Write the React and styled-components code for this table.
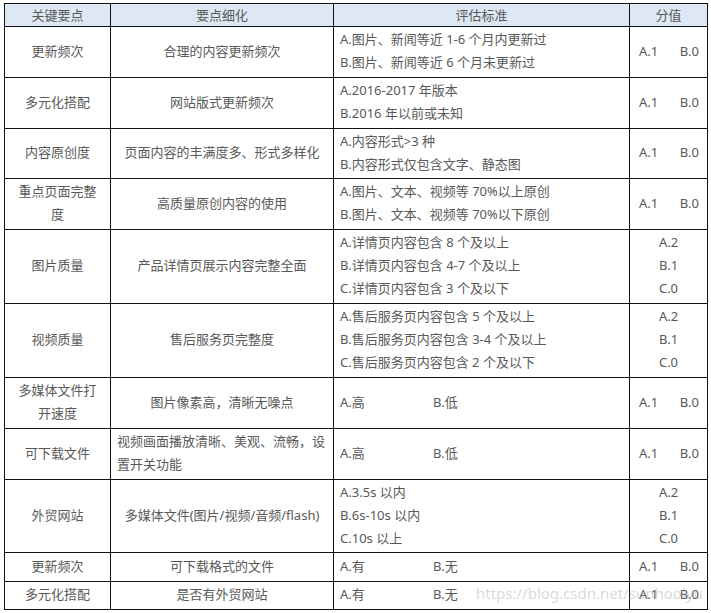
import React from "react";
import styled, { createGlobalStyle } from "styled-components";

const GlobalStyle = createGlobalStyle`
  body {
    margin: 0;
    background: #fff;
    font-family: "Noto Sans", "Noto Sans CJK SC", sans-serif;
  }
`;

const Page = styled.div`
  position: relative;
  padding: 3px 0 0 4px;
`;

const Table = styled.table`
  border-collapse: collapse;
  table-layout: fixed;
  width: 703px;
  color: #595959;
  font-size: 13px;
`;

const Row = styled.tr`
  height: ${(p) => p.$h}px;
`;

const HeadCell = styled.th`
  border: 1px solid #111;
  background: #dde8f4;
  font-weight: normal;
  text-align: center;
  line-height: 18px;
  padding: 0 0 1px;
`;

const Cell = styled.td`
  border: 1px solid #111;
  padding: 0 ${(p) => (p.$narrow ? 8 : 6)}px 2px;
  text-align: ${(p) => p.$align || "center"};
  vertical-align: middle;
  line-height: 23px;
`;

const Pair = styled.span`
  display: inline-block;
  width: ${(p) => p.$w}px;
`;

const Score = styled.div`
  display: flex;
  justify-content: space-between;
  padding: 0 2px 0 3px;
`;

const Watermark = styled.div`
  position: absolute;
  left: 476px;
  top: 583px;
  font-size: 15px;
  color: rgba(170, 170, 170, 0.45);
  pointer-events: none;
  white-space: nowrap;
`;

const rows = [
  { h: 51, key: "更新频次", detail: "合理的内容更新频次", crit: ["A.图片、新闻等近 1-6 个月内更新过", "B.图片、新闻等近 6 个月未更新过"], score: "ab" },
  { h: 51, key: "多元化搭配", detail: "网站版式更新频次", crit: ["A.2016-2017 年版本", "B.2016 年以前或未知"], score: "ab" },
  { h: 50, key: "内容原创度", detail: "页面内容的丰满度多、形式多样化", crit: ["A.内容形式>3 种", "B.内容形式仅包含文字、静态图"], score: "ab" },
  { h: 51, key: "重点页面完整度", detail: "高质量原创内容的使用", crit: ["A.图片、文本、视频等 70%以上原创", "B.图片、文本、视频等 70%以下原创"], score: "ab" },
  { h: 74, key: "图片质量", detail: "产品详情页展示内容完整全面", crit: ["A.详情页内容包含 8 个及以上", "B.详情页内容包含 4-7 个及以上", "C.详情页内容包含 3 个及以下"], score: "abc" },
  { h: 74, key: "视频质量", detail: "售后服务页完整度", crit: ["A.售后服务页内容包含 5 个及以上", "B.售后服务页内容包含 3-4 个及以上", "C.售后服务页内容包含 2 个及以下"], score: "abc" },
  { h: 51, key: "多媒体文件打开速度", detail: "图片像素高，清晰无噪点", pair: ["A.高", "B.低"], score: "ab" },
  { h: 51, key: "可下载文件", detail: "视频画面播放清晰、美观、流畅，设置开关功能", left: true, pair: ["A.高", "B.低"], score: "ab" },
  { h: 73, key: "外贸网站", detail: "多媒体文件(图片/视频/音频/flash)", crit: ["A.3.5s 以内", "B.6s-10s 以内", "C.10s 以上"], score: "abc" },
  { h: 29, key: "更新频次", detail: "可下载格式的文件", pair: ["A.有", "B.无"], score: "ab" },
  { h: 28, key: "多元化搭配", detail: "是否有外贸网站", pair: ["A.有", "B.无"], score: "ab" },
];

function Lines({ items }) {
  return items.map((t, i) => <div key={i}>{t}</div>);
}

export default function App() {
  return (
    <Page>
      <GlobalStyle />
      <Table>
        <colgroup>
          <col style={{ width: 106 }} />
          <col style={{ width: 223 }} />
          <col style={{ width: 296 }} />
          <col style={{ width: 78 }} />
        </colgroup>
        <thead>
          <Row $h={23}>
            <HeadCell>关键要点</HeadCell>
            <HeadCell>要点细化</HeadCell>
            <HeadCell>评估标准</HeadCell>
            <HeadCell>分值</HeadCell>
          </Row>
        </thead>
        <tbody>
          {rows.map((r, i) => (
            <Row key={i} $h={r.h}>
              <Cell $narrow>{r.key}</Cell>
              <Cell $align={r.left ? "left" : "center"}>{r.detail}</Cell>
              <Cell $align="left">
                {r.crit ? (
                  <Lines items={r.crit} />
                ) : (
                  <>
                    <Pair $w={93}>{r.pair[0]}</Pair>
                    <span>{r.pair[1]}</span>
                  </>
                )}
              </Cell>
              <Cell>
                {r.score === "ab" ? (
                  <Score>
                    <span>A.1</span>
                    <span>B.0</span>
                  </Score>
                ) : (
                  <Lines items={["A.2", "B.1", "C.0"]} />
                )}
              </Cell>
            </Row>
          ))}
        </tbody>
      </Table>
      <Watermark>https://blog.csdn.net/sunhooiyu</Watermark>
    </Page>
  );
}
